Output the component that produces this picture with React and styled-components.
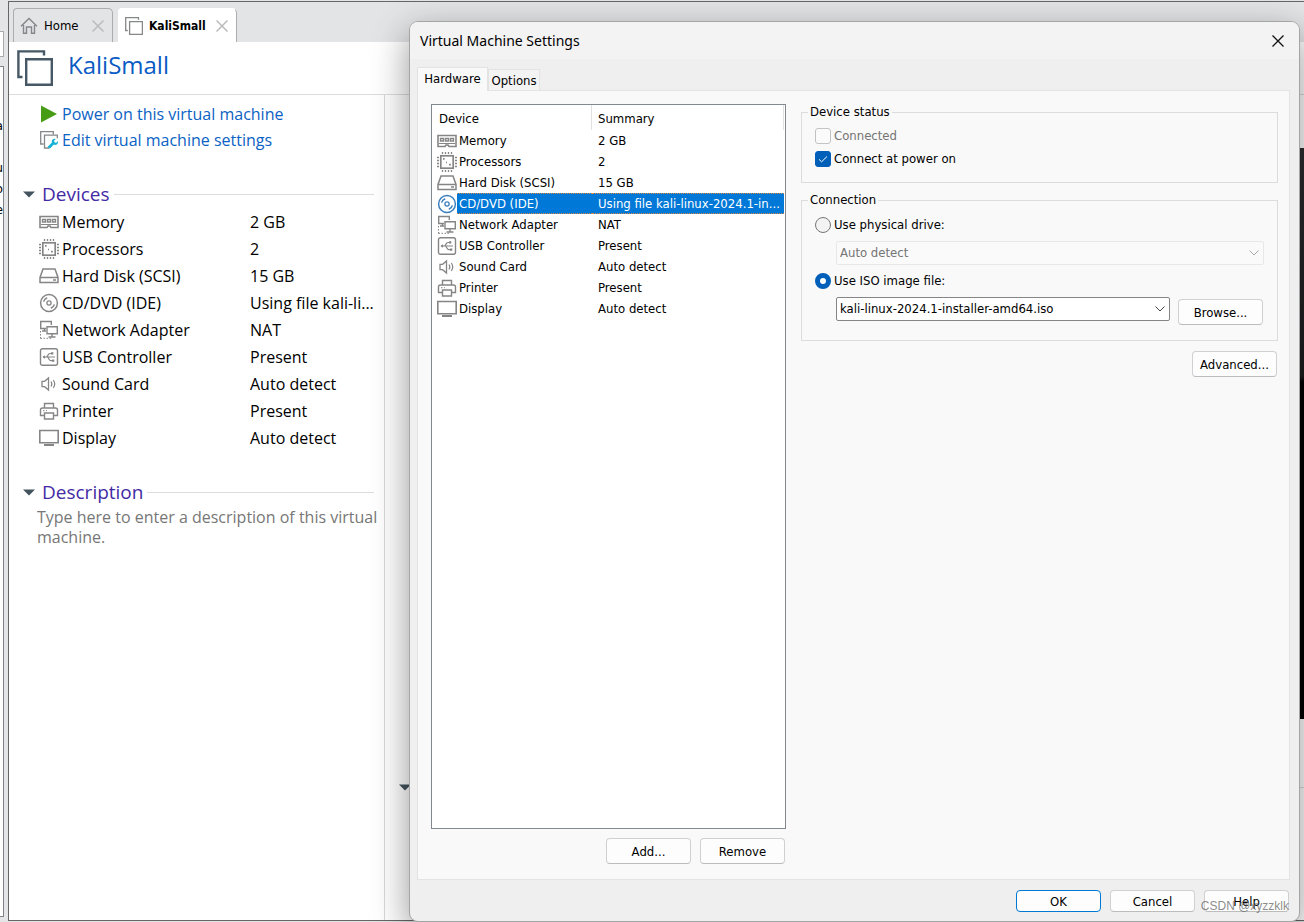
import React, { useState } from "react";
import styled, { createGlobalStyle, css } from "styled-components";

const UI_FONT = '"DejaVu Sans Condensed", "Noto Sans", sans-serif';
const PAGE_FONT = '"Open Sans", "Noto Sans", sans-serif';

const GlobalStyle = createGlobalStyle`
  *, *::before, *::after { box-sizing: border-box; }
  body { margin: 0; background: #e3e5e7; color: #000; font-family: ${PAGE_FONT}; }
  button, input, select, textarea { font: inherit; color: inherit; }
`;

/* ---------- Workspace behind the dialog ---------- */

const Screen = styled.div`
  position: relative;
  display: flex;
  min-height: 100vh;
  overflow: hidden;
`;

const LibraryEdge = styled.aside`
  display: flex;
  flex-direction: column;
  gap: 9px;
  width: 8px;
  padding: 31px 4px 5px 0;
`;

const SearchEdge = styled.div`
  height: 26px;
  background: #fff;
  border: solid #aaa;
  border-width: 1px 1px 1px 0;
`;

const TreeEdge = styled.div`
  flex: 1;
  display: flex;
  flex-direction: column;
  padding-top: 48px;
  overflow: hidden;
  background: #fff;
  border: solid #7f8388;
  border-width: 1px 1px 1px 0;
  font: 13px/21px ${UI_FONT};
`;

const TreeLetter = styled.span`
  display: flex;
  justify-content: flex-end;
  height: 21px;
`;

const Workspace = styled.main`
  flex: 1;
  min-width: 0;
  display: flex;
  flex-direction: column;
  margin: 1px 0;
  border: solid #666;
  border-width: 1px 0 1px 1px;
  background: #fff;
`;

const TabStrip = styled.nav`
  display: flex;
  gap: 5px;
  height: 40px;
  padding: 6px 4px 0;
  background: #e3e4e6;
`;

const VmTab = styled.div`
  display: flex;
  align-items: center;
  width: ${(p) => (p.$active ? 119 : 100)}px;
  padding: 0 8px 0 6px;
  border: 1px solid ${(p) => (p.$active ? "#fff" : "#aaacae")};
  border-right-color: #aaacae;
  border-bottom: 0;
  border-radius: 4px 5px 0 0;
  background: ${(p) => (p.$active ? "#fff" : "#e3e4e6")};
  font: ${(p) => (p.$active ? "700 12px" : "400 13px")}/16px ${UI_FONT};
`;

const TabName = styled.button`
  flex: 1;
  display: flex;
  align-items: center;
  gap: 6px;
  padding: 0;
  border: 0;
  background: none;
  white-space: nowrap;
`;

const TabClose = styled.button`
  display: flex;
  padding: 0;
  border: 0;
  background: none;
`;

const VmHeader = styled.header`
  display: flex;
  align-items: center;
  gap: 15px;
  height: 53px;
  padding-left: 8px;
  border-bottom: 1px solid #ddd;
`;

const VmTitle = styled.h1`
  margin: 0;
  padding-bottom: 6px;
  color: #0b5bc4;
  font-size: 24px;
  font-weight: 400;
  line-height: 32px;
`;

const VmContent = styled.div`
  flex: 1;
  display: flex;
`;

const Summary = styled.section`
  width: 376px;
  padding: 6px 10px 0 14px;
  border-right: 1px solid #d8d8d8;
`;

const Commands = styled.div`
  display: flex;
  flex-direction: column;
  padding-left: 17px;
`;

const Command = styled.a`
  display: flex;
  align-items: center;
  gap: 4px;
  height: 26px;
  color: #0b62c4;
  font-size: 16px;
  text-decoration: none;
`;

const SectionTitle = styled.h2`
  display: flex;
  align-items: center;
  gap: 7px;
  height: 28px;
  margin: 27px 0 0;
  color: #432aa5;
  font-size: 19px;
  font-weight: 400;

  &::after {
    content: "";
    flex: 1;
    height: 1px;
    margin-left: -3px;
    background: #ddd;
  }
`;

const SummaryTable = styled.table`
  width: 100%;
  margin-left: 16px;
  border-spacing: 0;
  font-size: 16px;
  line-height: 20px;

  th, td { height: 27px; padding: 0; text-align: left; font-weight: 400; white-space: nowrap; }
  th { width: 211px; }
`;

const IconLabel = styled.span`
  display: flex;
  align-items: center;
  gap: 3px;
`;

const Description = styled.textarea`
  display: block;
  width: 346px;
  height: 44px;
  margin-left: 14px;
  padding: 1px 0;
  border: 0;
  background: none;
  font-size: 16px;
  line-height: 20px;
  resize: none;
  overflow: hidden;

  &::placeholder { color: #777; opacity: 1; }
`;

const Preview = styled.section`
  flex: 1;
  display: flex;
  flex-direction: column;
  padding: 53px 0 0 14px;
`;

const Console = styled.div`
  height: 571px;
  margin-left: 20px;
  background: linear-gradient(#2d2e30, #1c1d1e 40%, #000 41%);
`;

const DetailsTitle = styled.div`
  display: flex;
  align-items: center;
  gap: 20px;
  margin-top: 65px;

  &::after { content: ""; flex: 1; height: 1px; background: #ddd; }
`;

/* ---------- Dialog ---------- */

const Dialog = styled.div`
  position: absolute;
  inset: 21px 4px 0 409px;
  display: flex;
  flex-direction: column;
  overflow: visible;
  border: 1px solid #a5a5a5;
  border-radius: 9px;
  background: #efefef;
  box-shadow: 0 12px 36px rgba(0, 0, 0, 0.42);
  font: 13px/16px ${UI_FONT};
`;

const TitleBar = styled.header`
  display: flex;
  align-items: center;
  justify-content: space-between;
  height: 37px;
  padding: 0 15px 0 10px;
  border-radius: 8px 8px 0 0;
  background: #f3f3f3;
`;

const DialogTitle = styled.h2`
  margin: 0;
  font: 400 14px/20px "Noto Sans", sans-serif;
`;

const CloseButton = styled.button`
  display: flex;
  padding: 0;
  border: 0;
  background: none;
`;

const DialogBody = styled.div`
  flex: 1;
  display: flex;
  flex-direction: column;
  padding: 8px 9px 0 7px;
`;

const PageTabs = styled.div`
  display: flex;
  align-items: flex-end;
  height: 23px;
`;

const PageTab = styled.button`
  height: 21px;
  width: 52px;
  padding: 1px 0 0;
  border: 1px solid #e3e3e3;
  border-bottom: 0;
  background: #f3f3f3;

  ${(p) => p.$active && css`
    position: relative;
    width: 71px;
    height: 24px;
    margin-bottom: -1px;
    padding: 0 0 1px;
    background: #f9f9f9;
  `}
`;

const Pane = styled.div`
  flex: 1;
  display: flex;
  gap: 15px;
  padding: 13px 11px 15px 13px;
  border: 1px solid #e3e3e3;
  background: #f9f9f9;
`;

const DeviceColumn = styled.div`
  width: 355px;
  display: flex;
  flex-direction: column;
  gap: 9px;
`;

const DeviceList = styled.div`
  flex: 1;
  border: 1px solid #828790;
  background: #fff;
`;

const DeviceTable = styled.table`
  width: 100%;
  padding-right: 1px;
  table-layout: fixed;
  border-spacing: 0;
`;

const HeadCell = styled.th`
  height: 25px;
  padding: 2px ${(p) => (p.$value ? 6 : 7)}px 0;
  border-right: 1px solid #e0e0e0;
  font-weight: 400;
  text-align: left;
`;

const IconColumn = styled.col`
  width: 25px;
`;

const NameColumn = styled.col`
  width: 135px;
`;

const DeviceCell = styled.td`
  height: 21px;
  padding: 0 2px 0 ${(p) => (p.$value ? 6 : 2)}px;
  border: 0 dotted #d98a45;
  border-width: ${(p) => (p.$selected ? "1px 0" : "0")};
  background: ${(p) => (p.$selected ? "#0078d7" : "transparent")};
  color: ${(p) => (p.$selected ? "#fff" : "#000")};
  white-space: nowrap;
  overflow: hidden;
  text-overflow: ellipsis;
`;

const IconCell = styled.td`
  height: 21px;
  padding: 0 0 0 5px;

  svg { display: block; }
`;

const ButtonRow = styled.div`
  display: flex;
  justify-content: flex-end;
  gap: 9px;
  padding: ${(p) => (p.$footer ? "10px 1px 9px 0" : "0 1px 0 0")};
`;

const PushButton = styled.button`
  width: 85px;
  height: ${(p) => (p.$short ? 22 : 26)}px;
  padding: 1px 0 0;
  border: 1px solid ${(p) => (p.$primary ? "#0078d4" : "#d0d0d0")};
  border-bottom-color: ${(p) => (p.$primary ? "#0078d4" : "#bcbcbc")};
  border-radius: 4px;
  background: #fdfdfd;
  line-height: 16px;
`;

const SettingsColumn = styled.div`
  flex: 1;
  min-width: 0;
  display: flex;
  flex-direction: column;
`;

const Group = styled.fieldset`
  display: flex;
  flex-direction: column;
  align-items: stretch;
  gap: ${(p) => p.$gap}px;
  min-width: 0;
  margin: 0 0 ${(p) => p.$after}px;
  padding: ${(p) => p.$pad};
  border: 1px solid #dcdcdc;
`;

const GroupTitle = styled.legend`
  margin-left: -7px;
  padding: 0 2px;
  line-height: 16px;
`;

const Option = styled.label`
  display: flex;
  align-items: center;
  gap: 3px;
  height: 16px;
  color: ${(p) => (p.$disabled ? "#747474" : "#000")};
`;

const Check = styled.input`
  appearance: none;
  width: 16px;
  height: 16px;
  margin: 0;
  border: 1px solid #c3c3c3;
  border-radius: 3px;
  background: #fbfbfb;

  &:checked {
    border-color: #005fb8;
    background: #005fb8;
  }
`;

const CheckBox = styled.span`
  position: relative;
  display: flex;

  svg { position: absolute; inset: 0; pointer-events: none; }
`;

const Radio = styled.input`
  appearance: none;
  width: 16px;
  height: 16px;
  margin: 0;
  border: 1px solid #767676;
  border-radius: 50%;
  background: #f3f3f3;

  &:checked {
    border: 5px solid #005fb8;
    background: #fff;
  }
`;

const DriveRow = styled.div`
  display: flex;
  align-items: flex-start;
  gap: 8px;
  padding-left: 21px;
`;

const SelectBox = styled.div`
  position: relative;
  flex: 1;
  height: 24px;

  select {
    appearance: none;
    width: 100%;
    height: 24px;
    padding: 0 24px 0 3px;
    border: 1px solid #858585;
    border-radius: 2px;
    background: #fff;
    opacity: 1;
  }
  select:disabled { border-color: #e8e8e8; background: #fafafa; color: #747474; }
  svg { position: absolute; right: 5px; top: 9px; pointer-events: none; }
`;

const BrowseSlot = styled.div`
  padding: 2px 1px 0 0;
`;

const Watermark = styled.span`
  position: absolute;
  right: 15px;
  bottom: 8px;
  color: rgba(110, 110, 110, 0.8);
  font: 12px/16px "Liberation Sans", sans-serif;
  pointer-events: none;
`;

/* ---------- Icons ---------- */

const drawings = {
  memory: (
    <>
      <path d="M1 4.5h18v11h-7l-1-1.5H9l-1 1.5H1z" strokeWidth="1.6" />
      <path d="M3.5 7.5h3v2.5h-3zM8.5 7.5h3v2.5h-3zM13.5 7.5h3v2.5h-3z" strokeWidth="1.4" />
      <path d="M2 12.5h16" />
    </>
  ),
  cpu: (
    <>
      <rect x="3.8" y="3.8" width="12.4" height="12.4" strokeWidth="1.7" />
      <path d="M5.5 0v2M8.5 0v2M11.5 0v2M14.5 0v2M5.5 18v2M8.5 18v2M11.5 18v2M14.5 18v2M0 5.5h2M0 8.5h2M0 11.5h2M0 14.5h2M18 5.5h2M18 8.5h2M18 11.5h2M18 14.5h2" strokeWidth="1.3" />
      <path d="M6 6.8h1.6M9 10.5h1M12 12.7h1.8" strokeWidth="1.7" />
    </>
  ),
  disk: (
    <>
      <path d="M4 3h12l3 8.5v5H1v-5z" strokeWidth="1.5" />
      <path d="M1 11.5h18M14 14h3" strokeWidth="1.4" />
    </>
  ),
  cd: (
    <>
      <circle cx="10" cy="10" r="8.4" strokeWidth="1.5" />
      <circle cx="10" cy="10" r="2.1" strokeWidth="1.3" />
      <path d="M4.6 8.6a5.7 5.7 0 0 1 3.6-3.9M15.4 11.4a5.7 5.7 0 0 1-3.6 3.9" strokeWidth="1.5" />
    </>
  ),
  network: (
    <>
      <path d="M7 8.5H1.7v-7h10.6V5M8 6.7h10.3v7H8zM13 13.7V17M9.5 17h7M5.5 8.5V11M3 11h4" strokeWidth="1.4" />
      <path d="M1.5 11v8M1.5 18.3h11" strokeDasharray="1.5 1.5" />
    </>
  ),
  usb: (
    <>
      <rect x="1.5" y="1.7" width="17" height="16.6" rx="2" strokeWidth="1.4" />
      <path d="M4 10h12M7 10c2 0 1.5-3.5 4-3.5h2M8 10c2 0 1.5 3.7 4 3.7h2" strokeWidth="1.2" />
      <path d="M3.5 10l2.5-1.8v3.6zM12 5.3h2.3v2.3H12zM13 12.5h2.3v2.3H13z" fill="currentColor" stroke="none" />
    </>
  ),
  sound: (
    <>
      <path d="M3 7.3h2.6L9.5 4v12l-3.9-3.3H3z" strokeWidth="1.3" />
      <path d="M12 7.5c1 1.5 1 3.5 0 5M14.3 6c1.7 2.4 1.7 5.6 0 8" strokeWidth="1.2" />
    </>
  ),
  printer: (
    <>
      <path d="M5.5 7V2.5h9V7M5.5 14.5h-4V9q0-2 2-2h13q2 0 2 2v5.5h-4M5.5 12h9v6h-9z" strokeWidth="1.4" />
      <path d="M4 9.7h1.5M7 9.7h1" />
    </>
  ),
  display: (
    <>
      <path d="M.8 2.5h18.4v12.2H.8z" strokeWidth="1.6" />
      <path d="M5 17h10" strokeWidth="2" />
    </>
  ),
};

function DeviceIcon({ name, color = "#858585" }) {
  return (
    <svg width="20" height="20" viewBox="0 0 20 20" fill="none" stroke="currentColor" color={color} aria-hidden="true">
      {drawings[name]}
    </svg>
  );
}

function HomeIcon() {
  return (
    <svg width="18" height="18" viewBox="0 0 18 18" fill="none" stroke="#85878a" strokeWidth="1.4" aria-hidden="true">
      <path d="M1 9.2 9 1.5l8 7.7M3.5 8v8.3h3V10h5v6.3h3V8" />
    </svg>
  );
}

function MachineIcon({ size = 18, color = "#858789" }) {
  return (
    <svg width={size} height={size} viewBox="0 0 36 36" fill="none" stroke={color} strokeWidth={size > 20 ? 2.4 : 2.6} aria-hidden="true">
      <path d="M5.5 27H1.4V1.4H27v4.1M9.2 9.2h25.6v25.6H9.2z" />
    </svg>
  );
}

function PlayIcon() {
  return (
    <svg width="18" height="18" viewBox="0 0 18 18" aria-hidden="true">
      <path d="M1 .5 17 9 1 17.5z" fill="#469c14" />
    </svg>
  );
}

function EditIcon() {
  return (
    <svg width="18" height="18" viewBox="0 0 18 18" fill="none" aria-hidden="true">
      <path d="M3.5 13H.7V.7h12.6v2.5M9 17H4.5V4.2h12.8v3" stroke="#858789" strokeWidth="1.3" />
      <path d="m8.7 16.8 5.2-5.2" stroke="#13b2d6" strokeWidth="2.8" />
      <path d="M11.8 11c-.2-2.2 1.7-3.7 4-3L14 9.7l.6 1.7 1.7.4 1.6-1.7c.4 2.2-.8 4-3.2 3.9z" fill="#13b2d6" />
    </svg>
  );
}

function CrossIcon({ size, color, width }) {
  return (
    <svg width={size} height={size} viewBox="0 0 12 12" stroke={color} strokeWidth={width} aria-hidden="true">
      <path d="m.5.5 11 11m0-11-11 11" />
    </svg>
  );
}

function Arrow() {
  return (
    <svg width="12" height="7" viewBox="0 0 12 7" aria-hidden="true">
      <path d="M0 .5h12L6 6.5z" fill="#43545f" />
    </svg>
  );
}

function Chevron({ color }) {
  return (
    <svg width="10" height="6" viewBox="0 0 10 6" fill="none" stroke={color} aria-hidden="true">
      <path d="m.5.5 4.5 4.5L9.5.5" />
    </svg>
  );
}

/* ---------- Content ---------- */

const devices = [
  ["memory", "Memory", "2 GB"],
  ["cpu", "Processors", "2"],
  ["disk", "Hard Disk (SCSI)", "15 GB"],
  ["cd", "CD/DVD (IDE)", "Using file kali-linux-2024.1-in...", "Using file kali-li..."],
  ["network", "Network Adapter", "NAT"],
  ["usb", "USB Controller", "Present"],
  ["sound", "Sound Card", "Auto detect"],
  ["printer", "Printer", "Present"],
  ["display", "Display", "Auto detect"],
];

function MachinePage() {
  return (
    <Workspace>
      <TabStrip>
        <VmTab>
          <TabName><HomeIcon />Home</TabName>
          <TabClose aria-label="Close Home"><CrossIcon size={12} color="#bbb" width={1.5} /></TabClose>
        </VmTab>
        <VmTab $active>
          <TabName><MachineIcon />KaliSmall</TabName>
          <TabClose aria-label="Close KaliSmall"><CrossIcon size={12} color="#bbb" width={1.5} /></TabClose>
        </VmTab>
      </TabStrip>
      <VmHeader>
        <MachineIcon size={36} color="#465866" />
        <VmTitle>KaliSmall</VmTitle>
      </VmHeader>
      <VmContent>
        <Summary>
          <Commands>
            <Command href="#power"><PlayIcon />Power on this virtual machine</Command>
            <Command href="#settings"><EditIcon />Edit virtual machine settings</Command>
          </Commands>
          <SectionTitle><Arrow />Devices</SectionTitle>
          <SummaryTable>
            <tbody>
              {devices.map(([icon, name, value, brief]) => (
                <tr key={name}>
                  <th scope="row"><IconLabel><DeviceIcon name={icon} />{name}</IconLabel></th>
                  <td>{brief || value}</td>
                </tr>
              ))}
            </tbody>
          </SummaryTable>
          <SectionTitle><Arrow />Description</SectionTitle>
          <Description aria-label="Description" placeholder="Type here to enter a description of this virtual machine." />
        </Summary>
        <Preview>
          <Console />
          <DetailsTitle><Arrow /></DetailsTitle>
        </Preview>
      </VmContent>
    </Workspace>
  );
}

function SettingsDialog() {
  const [selected, setSelected] = useState("cd");
  const [powerOn, setPowerOn] = useState(true);
  const [source, setSource] = useState("iso");
  return (
    <Dialog role="dialog" aria-labelledby="dialog-title">
      <TitleBar>
        <DialogTitle id="dialog-title">Virtual Machine Settings</DialogTitle>
        <CloseButton aria-label="Close"><CrossIcon size={12} color="#111" width={1.3} /></CloseButton>
      </TitleBar>
      <DialogBody>
        <PageTabs role="tablist">
          <PageTab role="tab" aria-selected="true" $active>Hardware</PageTab>
          <PageTab role="tab" aria-selected="false">Options</PageTab>
        </PageTabs>
        <Pane>
          <DeviceColumn>
            <DeviceList>
              <DeviceTable>
                <colgroup>
                  <IconColumn />
                  <NameColumn />
                  <col />
                </colgroup>
                <thead>
                  <tr>
                    <HeadCell colSpan={2}>Device</HeadCell>
                    <HeadCell $value>Summary</HeadCell>
                  </tr>
                </thead>
                <tbody>
                  {devices.map(([icon, name, value]) => {
                    const on = icon === selected;
                    return (
                      <tr key={icon} onClick={() => setSelected(icon)}>
                        <IconCell><DeviceIcon name={icon} color={on ? "#3b7fbd" : undefined} /></IconCell>
                        <DeviceCell $selected={on}>{name}</DeviceCell>
                        <DeviceCell $selected={on} $value>{value}</DeviceCell>
                      </tr>
                    );
                  })}
                </tbody>
              </DeviceTable>
            </DeviceList>
            <ButtonRow>
              <PushButton>Add...</PushButton>
              <PushButton>Remove</PushButton>
            </ButtonRow>
          </DeviceColumn>
          <SettingsColumn>
            <Group $gap={7} $after={9} $pad="8px 13px 15px">
              <GroupTitle>Device status</GroupTitle>
              <Option $disabled><Check type="checkbox" disabled />Connected</Option>
              <Option>
                <CheckBox>
                  <Check type="checkbox" checked={powerOn} onChange={() => setPowerOn(!powerOn)} />
                  {powerOn && (
                    <svg width="16" height="16" viewBox="0 0 16 16" fill="none" stroke="#fff">
                      <path d="m4 8.3 2.6 2.5L12 5.5" />
                    </svg>
                  )}
                </CheckBox>
                Connect at power on
              </Option>
            </Group>
            <Group $gap={8} $after={10} $pad="9px 13px 15px">
              <GroupTitle>Connection</GroupTitle>
              <Option>
                <Radio type="radio" name="source" checked={source === "drive"} onChange={() => setSource("drive")} />
                Use physical drive:
              </Option>
              <DriveRow>
                <SelectBox>
                  <select aria-label="Physical drive" disabled={source !== "drive"}><option>Auto detect</option></select>
                  <Chevron color="#a8a8a8" />
                </SelectBox>
              </DriveRow>
              <Option>
                <Radio type="radio" name="source" checked={source === "iso"} onChange={() => setSource("iso")} />
                Use ISO image file:
              </Option>
              <DriveRow>
                <SelectBox>
                  <select aria-label="ISO image file"><option>kali-linux-2024.1-installer-amd64.iso</option></select>
                  <Chevron color="#444" />
                </SelectBox>
                <BrowseSlot><PushButton>Browse...</PushButton></BrowseSlot>
              </DriveRow>
            </Group>
            <ButtonRow><PushButton>Advanced...</PushButton></ButtonRow>
          </SettingsColumn>
        </Pane>
        <ButtonRow $footer>
          <PushButton $short $primary>OK</PushButton>
          <PushButton $short>Cancel</PushButton>
          <PushButton $short>Help</PushButton>
        </ButtonRow>
      </DialogBody>
    </Dialog>
  );
}

export default function App() {
  return (
    <Screen>
      <GlobalStyle />
      <LibraryEdge>
        <SearchEdge />
        <TreeEdge>
          <TreeLetter>a</TreeLetter>
          <TreeLetter />
          <TreeLetter>u</TreeLetter>
          <TreeLetter>o</TreeLetter>
          <TreeLetter>e</TreeLetter>
        </TreeEdge>
      </LibraryEdge>
      <MachinePage />
      <SettingsDialog />
      <Watermark>CSDN @xyzzklk</Watermark>
    </Screen>
  );
}
